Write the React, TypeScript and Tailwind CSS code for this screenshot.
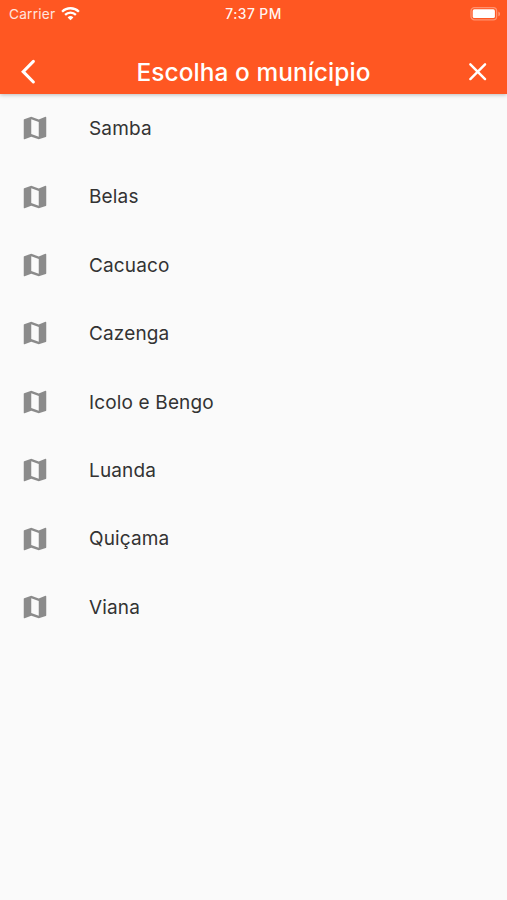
const municipios = ['Samba', 'Belas', 'Cacuaco', 'Cazenga', 'Icolo e Bengo', 'Luanda', 'Quiçama', 'Viana'];

function WifiIcon() {
  return (
    <svg className="ml-[5.4px] h-[14px] w-[19px]" viewBox="0 0 19 14" fill="none" stroke="white" strokeWidth="2.3">
      <path d="M1.1 4.7a12 12 0 0 1 16.8 0" />
      <path d="M4.1 7.9a7.7 7.7 0 0 1 10.8 0" />
      <path d="M9.5 13.3L6.6 10.4a4.2 4.2 0 0 1 5.8 0z" fill="white" stroke="none" />
    </svg>
  );
}

function BatteryIcon() {
  return (
    <svg className="h-[15px] w-[31px]" viewBox="0 0 31 15">
      <rect x="1" y="0.6" width="25.6" height="12.2" rx="3.4" fill="none" stroke="white" strokeOpacity="0.35" strokeWidth="1.3" />
      <rect x="2.7" y="2.3" width="22.2" height="8.8" rx="1.6" fill="white" />
      <path d="M28.4 4.5v4.8c1-.4 1.6-1.3 1.6-2.4s-.6-2-1.6-2.4z" fill="white" fillOpacity="0.4" />
    </svg>
  );
}

function MapIcon() {
  return (
    <svg className="h-[30px] w-[30px] shrink-0" viewBox="0 0 24 24" fill="#8b8b8b">
      <path d="M20.5 3l-.16.03L15 5.1 9 3 3.36 4.9c-.21.07-.36.25-.36.48V20.5c0 .28.22.5.5.5l.16-.03L9 18.9l6 2.1 5.64-1.9c.21-.07.36-.25.36-.48V3.5c0-.28-.22-.5-.5-.5zM15 19l-6-2.11V5l6 2.11V19z" />
    </svg>
  );
}

export default function App() {
  return (
    <div className="flex h-[900px] w-full flex-col overflow-hidden bg-[#fafafa] font-['Inter','Liberation_Sans',sans-serif]">
      <header className="h-[94px] shrink-0 bg-[#ff5722] text-white shadow-[0_1px_4px_rgba(0,0,0,0.25)]">
        {/* Status bar */}
        <div className="grid h-[28px] grid-cols-3 items-center">
          <div className="flex items-center pl-[9px]">
            <span className="text-[13.7px] tracking-[0.2px] text-white/85">Carrier</span>
            <WifiIcon />
          </div>
          <span className="text-center text-[13.8px] font-medium tracking-[0.45px] text-white/95">7:37 PM</span>
          <div className="flex justify-end pr-[6px]">
            <BatteryIcon />
          </div>
        </div>

        {/* Title bar */}
        <div className="flex h-[66px] items-center justify-between pl-[20.5px] pr-[14.5px] pt-[22px]">
          <button aria-label="Voltar" className="w-[29.4px]">
            <svg className="h-[29.4px] w-[29.4px]" viewBox="0 0 24 24" fill="none" stroke="white" strokeWidth="2.5" strokeLinecap="round">
              <path d="M10.1 3.6L1.8 12l8.3 8.4" />
            </svg>
          </button>
          <h1 className="-ml-[6px] text-[24.4px] font-medium leading-[30px] tracking-[0.08px]">Escolha o munícipio</h1>
          <button aria-label="Fechar" className="w-[29.4px]">
            <svg className="h-[29.4px] w-[29.4px]" viewBox="0 0 24 24" fill="none" stroke="white" strokeWidth="2" strokeLinecap="round">
              <path d="M6 6l12 12M18 6L6 18" />
            </svg>
          </button>
        </div>
      </header>

      <ul>
        {municipios.map((nome) => (
          <li key={nome} className="flex h-[68.4px] items-center gap-[39px] pl-[20px]">
            <MapIcon />
            <span className="pt-[2px] text-[19px] tracking-[0.15px] text-[#333333]">{nome}</span>
          </li>
        ))}
      </ul>
    </div>
  );
}
